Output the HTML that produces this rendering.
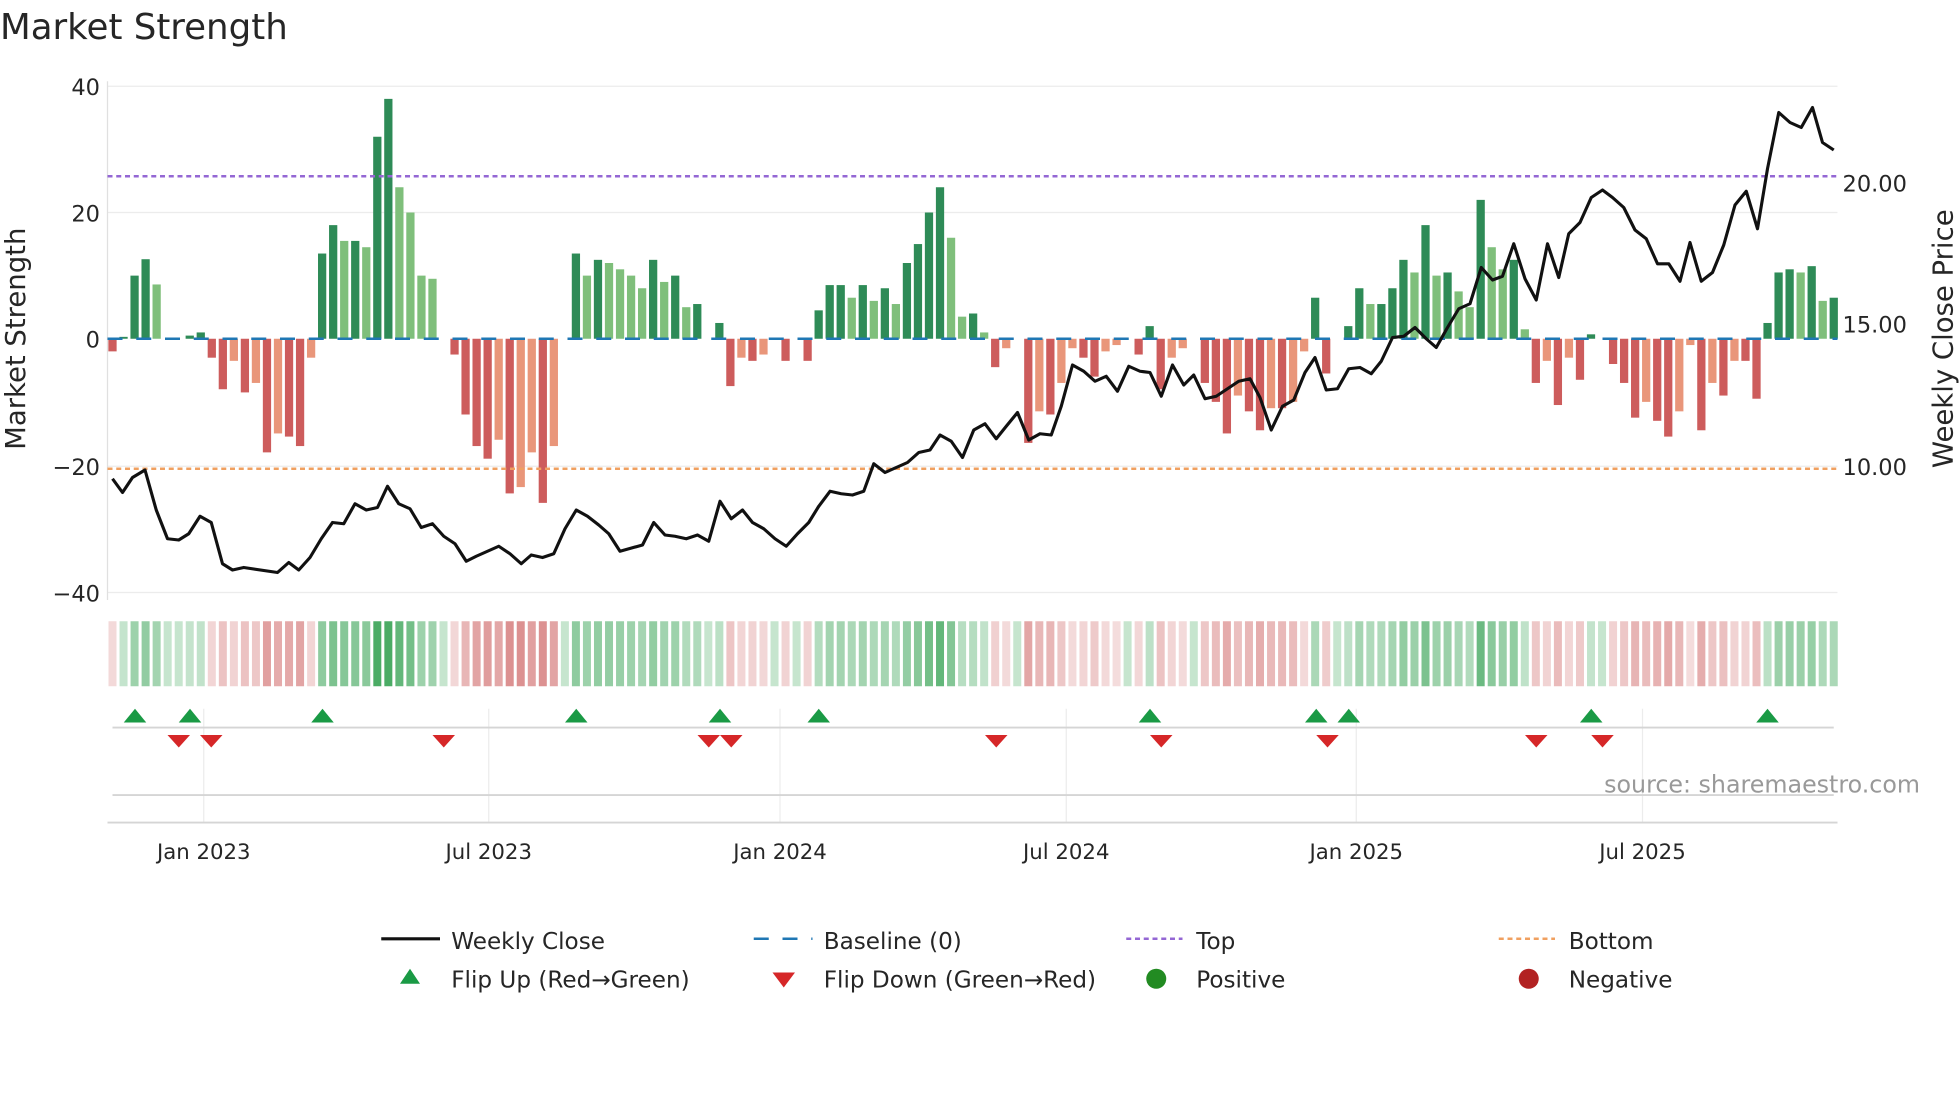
<!DOCTYPE html>
<html><head><meta charset="utf-8"><style>
html,body{margin:0;padding:0;background:#fff;width:1960px;height:1102px;overflow:hidden}
svg{display:block}
text{font-family:"DejaVu Sans","Liberation Sans",sans-serif;fill:#262626}
</style></head><body>
<svg id="s" width="1960" height="1102" viewBox="0 0 1568 881.6" xmlns="http://www.w3.org/2000/svg">
<text x="0" y="31" font-size="28.5">Market Strength</text>
<g stroke="#ececec" stroke-width="1">
<line x1="86" y1="69" x2="1470" y2="69"/><line x1="86" y1="170" x2="1470" y2="170"/>
<line x1="86" y1="373" x2="1470" y2="373"/><line x1="86" y1="474" x2="1470" y2="474"/>
</g>
<line x1="86" y1="65" x2="86" y2="480" stroke="#e0e0e0"/>
<g font-size="18" text-anchor="end">
<text x="80" y="76">40</text><text x="80" y="177">20</text><text x="80" y="278">0</text>
<text x="80" y="380">−20</text><text x="80" y="481">−40</text>
</g>
<g font-size="18">
<text x="1474" y="153">20.00</text><text x="1474" y="266">15.00</text><text x="1474" y="380">10.00</text>
</g>
<text font-size="22" transform="translate(20,271) rotate(-90)" text-anchor="middle">Market Strength</text>
<text font-size="22" transform="translate(1562,271) rotate(-90)" text-anchor="middle">Weekly Close Price</text>
<g id="bars"></g>
<line x1="86" y1="141" x2="1470" y2="141" stroke="#9467d4" stroke-width="2" stroke-dasharray="4,3"/>
<line x1="86" y1="375" x2="1470" y2="375" stroke="#f0a060" stroke-width="2" stroke-dasharray="4,3"/>
<polyline id="price" fill="none" stroke="#111" stroke-width="2.5" stroke-linejoin="round"/>
<g id="heat"></g>
<g stroke="#ececec">
<line x1="163" y1="567" x2="163" y2="658"/><line x1="391" y1="567" x2="391" y2="658"/>
<line x1="624" y1="567" x2="624" y2="658"/><line x1="853" y1="567" x2="853" y2="658"/>
<line x1="1085" y1="567" x2="1085" y2="658"/><line x1="1314" y1="567" x2="1314" y2="658"/>
</g>
<line x1="90" y1="582" x2="1467" y2="582" stroke="#d5d5d5" stroke-width="1.5"/>
<line x1="90" y1="636" x2="1467" y2="636" stroke="#d5d5d5" stroke-width="1.5"/>
<line x1="86" y1="658" x2="1470" y2="658" stroke="#d5d5d5" stroke-width="1.5"/>
<g id="mk"></g>
<text x="1536" y="634" font-size="19" text-anchor="end" style="fill:#999">source: sharemaestro.com</text>
<g font-size="17" text-anchor="middle">
<text x="163" y="687">Jan 2023</text><text x="391" y="687">Jul 2023</text><text x="624" y="687">Jan 2024</text>
<text x="853" y="687">Jul 2024</text><text x="1085" y="687">Jan 2025</text><text x="1314" y="687">Jul 2025</text>
</g>
<g font-size="18.5">
<line x1="305" y1="751" x2="352" y2="751" stroke="#111" stroke-width="2.5"/>
<text x="361" y="759">Weekly Close</text>
<line x1="603" y1="751" x2="650" y2="751" stroke="#1f77b4" stroke-width="2" stroke-dasharray="12,11"/>
<text x="659" y="759">Baseline (0)</text>
<line x1="901" y1="751" x2="946" y2="751" stroke="#9467d4" stroke-width="2" stroke-dasharray="4,3"/>
<text x="957" y="759">Top</text>
<line x1="1199" y1="751" x2="1244" y2="751" stroke="#f0a060" stroke-width="2" stroke-dasharray="4,3"/>
<text x="1255" y="759">Bottom</text>
<polygon points="320,787 328,775 336,787" fill="#1a9a45"/>
<text x="361" y="790">Flip Up (Red→Green)</text>
<polygon points="618,778 636,778 627,790" fill="#d62728"/>
<text x="659" y="790">Flip Down (Green→Red)</text>
<circle cx="925" cy="783" r="8" fill="#228b22"/>
<text x="957" y="790">Positive</text>
<circle cx="1223" cy="783" r="8" fill="#b22222"/>
<text x="1255" y="790">Negative</text>
</g>
</svg>
<script>
var v=[-2,0.3,10,12.6,8.6,0,0,0.5,1,-3,-8,-3.5,-8.5,-7,-18,-15,-15.5,-17,-3,13.5,18,15.5,15.5,14.5,32,38,24,20,10,9.5,0,-2.5,-12,-17,-19,-16,-24.5,-23.5,-18,-26,-17,0,13.5,10,12.5,12,11,10,8,12.5,9,10,5,5.5,0,2.5,-7.5,-3,-3.5,-2.5,0,-3.5,0,-3.5,4.5,8.5,8.5,6.5,8.5,6,8,5.5,12,15,20,24,16,3.5,4,1,-4.5,-1.5,0,-16.5,-11.5,-12,-7,-1.5,-3,-6,-2,-1,0,-2.5,2,-8,-3,-1.5,0,-7,-10,-15,-9,-11.5,-14.5,-11,-11,-10,-2,6.5,-5.5,0,2,8,5.5,5.5,8,12.5,10.5,18,10,10.5,7.5,5,22,14.5,11,12.5,1.5,-7,-3.5,-10.5,-3,-6.5,0.7,0,-4,-7,-12.5,-10,-13,-15.5,-11.5,-1,-14.5,-7,-9,-3.5,-3.5,-9.5,2.5,10.5,11,10.5,11.5,6,6.5];
var n=v.length,x0=90,x1=1467,st=(x1-x0)/(n-1),NS="http://www.w3.org/2000/svg";
function el(p,t,a){var e=document.createElementNS(NS,t);for(var k in a)e.setAttribute(k,a[k]);p.appendChild(e);return e;}
var B=document.getElementById('bars'),H=document.getElementById('heat');
for(var i=0;i<n;i++){var x=x0+i*st,y=v[i],pv=i?v[i-1]:0,c;
 if(y>=0)c=(y>=pv)?'#2e8b57':'#7fbf7b';else c=(y<=pv)?'#cd5c5c':'#e9967a';
 var h=Math.abs(y)*5.05; if(h>0.3) el(B,'rect',{x:x-3.3,y:y>=0?271-h:271,width:6.6,height:h,fill:c});
 var hc;
 if(y>=0){hc='rgba(50,160,80,'+(0.28+Math.min(0.6,y/50))+')';} else {hc='rgba(200,80,80,'+(0.18+Math.min(0.45,-y/50))+')';}
 el(H,'rect',{x:x-3.2,y:497,width:6.4,height:52,fill:hc});
}
el(B,'line',{x1:86,y1:271,x2:1470,y2:271,stroke:'#1f77b4','stroke-width':2,'stroke-dasharray':'12,11'});
var P="90,383 98,394 106,382 116,376 125,408 134,431 143,432 151,427 160,413 169,418 178,451 186,456 195,454 222,458 231,450 239,456 248,446 257,431 266,418 275,419 284,403 293,408 302,406 310,389 319,403 328,407 337,422 346,419 355,429 364,435 373,449 381,445 399,437 408,443 417,451 425,444 434,446 443,443 452,423 461,408 470,413 479,420 487,427 496,441 514,436 523,418 532,428 540,429 549,431 558,428 567,433 576,401 585,415 594,408 602,418 611,423 620,431 629,437 638,427 647,418 655,405 664,393 673,395 682,396 691,393 699,371 708,378 717,374 726,370 735,362 744,360 752,348 761,353 770,366 779,344 788,339 797,351 805,341 814,330 823,352 832,347 841,348 849,325 858,292 867,297 876,305 885,301 894,313 903,293 912,297 920,298 929,317 938,292 947,308 955,300 964,319 973,317 982,311 991,305 1000,303 1008,318 1017,344 1026,325 1035,320 1044,298 1052,286 1061,312 1070,311 1079,295 1088,294 1097,299 1105,289 1114,270 1123,269 1132,262 1141,271 1149,278 1158,262 1167,247 1176,243 1185,214 1194,224 1202,221 1211,195 1220,223 1229,240 1238,195 1247,222 1255,187 1264,178 1273,158 1282,152 1290,158 1299,166 1308,184 1317,191 1326,211 1335,211 1344,225 1352,194 1361,225 1370,218 1379,196 1388,164 1397,153 1406,183 1414,135 1423,90 1432,98 1441,102 1450,86 1458,114 1467,120";
document.getElementById('price').setAttribute('points',P);
var M=document.getElementById('mk');
[108,152,258,461,576,655,920,1053,1079,1273,1414].forEach(function(x){el(M,'polygon',{points:(x-9)+',578 '+x+',567 '+(x+9)+',578',fill:'#1a9a45'});});
[143,169,355,567,585,797,929,1062,1229,1282].forEach(function(x){el(M,'polygon',{points:(x-9)+',588 '+(x+9)+',588 '+x+',598',fill:'#d62728'});});
</script>
</body></html>
